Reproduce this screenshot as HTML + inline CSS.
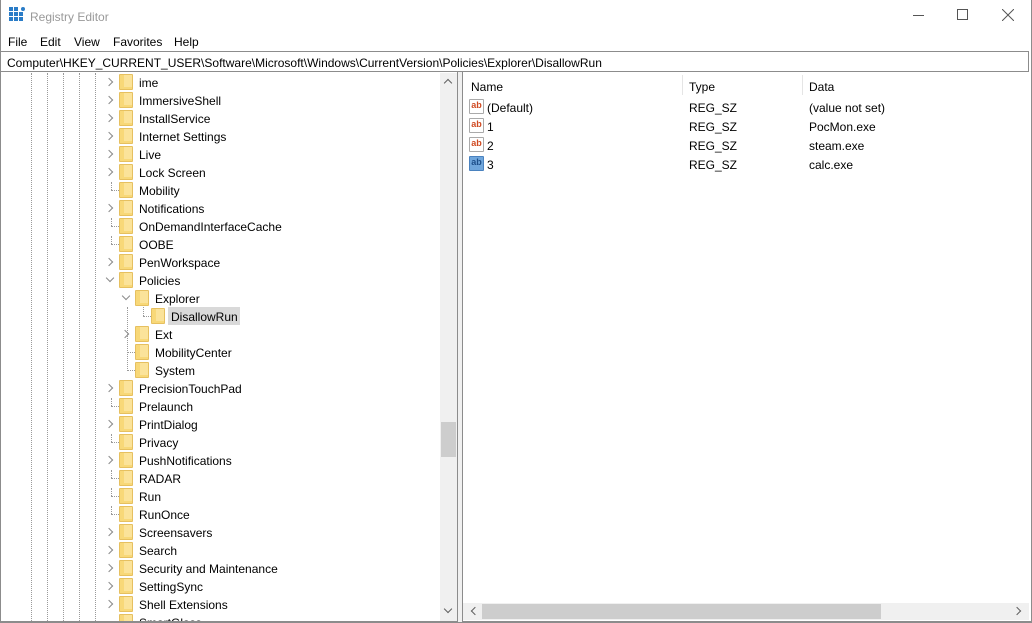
<!DOCTYPE html>
<html><head><meta charset="utf-8"><style>
*{margin:0;padding:0;box-sizing:border-box}
body{width:1032px;height:623px;overflow:hidden;background:#fff;font-family:"Liberation Sans",sans-serif;font-size:12px;color:#000;position:relative}
.a{position:absolute}
.t{position:absolute;white-space:nowrap;line-height:18px;padding-top:1px}
.f{position:absolute;width:14px;height:16px;background:#f8d878;border:1px solid #e6c060;border-radius:1px}
.f:after{content:"";position:absolute;left:4px;top:0;width:8px;height:12px;background:#fbe39a}
.ch{position:absolute;width:6px;height:6px;border-right:1px solid #8a8a8a;border-bottom:1px solid #8a8a8a}
.r{transform:rotate(-45deg)}
.d{transform:rotate(45deg)}
.vl{position:absolute;width:0;border-left:1px dotted #9a9a9a}
.hl{position:absolute;height:0;border-top:1px dotted #9a9a9a}
.ic{position:absolute;width:15px;height:15px;border:1px solid #aaa;background:#fff;font-size:9px;font-weight:bold;color:#d04a21;line-height:11px;text-align:center;border-radius:1px}
#tree{position:absolute;left:1px;top:72px;width:456px;height:549px;overflow:hidden}
#tree>div{margin-left:-1px;margin-top:-72px}
</style></head><body>
<div class="a" style="left:0;top:0;width:1032px;height:623px;border:1px solid #8c8c8c;border-top:none"></div>
<svg class="a" style="left:8px;top:7px" width="18" height="18"><rect x="1" y="5" width="4" height="4" fill="#2a7cc7"/><rect x="6" y="5" width="4" height="4" fill="#2a7cc7"/><rect x="1" y="10" width="4" height="4" fill="#2a7cc7"/><rect x="6" y="10" width="4" height="4" fill="#2a7cc7"/><rect x="11" y="10" width="4" height="4" fill="#2a7cc7"/><rect x="11" y="5" width="4" height="4" fill="#2a7cc7"/><rect x="1" y="0" width="4" height="4" fill="#2a7cc7"/><rect x="6" y="0" width="4" height="4" fill="#2a7cc7"/><circle cx="15" cy="2" r="2" fill="#2a7cc7"/></svg>
<div class="t" style="left:30px;top:7px;color:#999;font-size:12px">Registry Editor</div>
<div class="a" style="left:913px;top:15px;width:11px;height:1px;background:#555"></div>
<div class="a" style="left:957px;top:9px;width:11px;height:11px;border:1px solid #555"></div>
<svg class="a" style="left:1002px;top:9px" width="12" height="12"><path d="M0 0L12 12M12 0L0 12" stroke="#555" stroke-width="1"/></svg>
<div class="t" style="left:8px;top:32px">File</div>
<div class="t" style="left:40px;top:32px">Edit</div>
<div class="t" style="left:74px;top:32px">View</div>
<div class="t" style="left:113px;top:32px">Favorites</div>
<div class="t" style="left:174px;top:32px">Help</div>
<div class="a" style="left:0;top:51px;width:1029px;height:21px;border:1px solid #8c8c8c"></div>
<div class="t" style="left:7px;top:53px">Computer\HKEY_CURRENT_USER\Software\Microsoft\Windows\CurrentVersion\Policies\Explorer\DisallowRun</div>
<div id="tree"><div style="position:relative">
<div class="vl" style="left:31px;top:73px;height:548px"></div>
<div class="vl" style="left:47px;top:73px;height:548px"></div>
<div class="vl" style="left:63px;top:73px;height:548px"></div>
<div class="vl" style="left:79px;top:73px;height:548px"></div>
<div class="vl" style="left:95px;top:73px;height:548px"></div>
<div class="ch r" style="left:106px;top:79px"></div><div class="f" style="left:119px;top:74px"></div><div class="t" style="left:139px;top:73px">ime</div>
<div class="ch r" style="left:106px;top:97px"></div><div class="f" style="left:119px;top:92px"></div><div class="t" style="left:139px;top:91px">ImmersiveShell</div>
<div class="ch r" style="left:106px;top:115px"></div><div class="f" style="left:119px;top:110px"></div><div class="t" style="left:139px;top:109px">InstallService</div>
<div class="ch r" style="left:106px;top:133px"></div><div class="f" style="left:119px;top:128px"></div><div class="t" style="left:139px;top:127px">Internet Settings</div>
<div class="ch r" style="left:106px;top:151px"></div><div class="f" style="left:119px;top:146px"></div><div class="t" style="left:139px;top:145px">Live</div>
<div class="ch r" style="left:106px;top:169px"></div><div class="f" style="left:119px;top:164px"></div><div class="t" style="left:139px;top:163px">Lock Screen</div>
<div class="vl" style="left:111px;top:182px;height:8px"></div><div class="hl" style="left:111px;top:190px;width:8px"></div><div class="f" style="left:119px;top:182px"></div><div class="t" style="left:139px;top:181px">Mobility</div>
<div class="ch r" style="left:106px;top:205px"></div><div class="f" style="left:119px;top:200px"></div><div class="t" style="left:139px;top:199px">Notifications</div>
<div class="vl" style="left:111px;top:218px;height:8px"></div><div class="hl" style="left:111px;top:226px;width:8px"></div><div class="f" style="left:119px;top:218px"></div><div class="t" style="left:139px;top:217px">OnDemandInterfaceCache</div>
<div class="vl" style="left:111px;top:236px;height:8px"></div><div class="hl" style="left:111px;top:244px;width:8px"></div><div class="f" style="left:119px;top:236px"></div><div class="t" style="left:139px;top:235px">OOBE</div>
<div class="ch r" style="left:106px;top:259px"></div><div class="f" style="left:119px;top:254px"></div><div class="t" style="left:139px;top:253px">PenWorkspace</div>
<div class="ch d" style="left:107px;top:275px"></div><div class="f" style="left:119px;top:272px"></div><div class="t" style="left:139px;top:271px">Policies</div>
<div class="ch d" style="left:123px;top:293px"></div><div class="f" style="left:135px;top:290px"></div><div class="t" style="left:155px;top:289px">Explorer</div>
<div class="vl" style="left:127px;top:307px;height:64px"></div>
<div class="vl" style="left:143px;top:307px;height:9px"></div><div class="hl" style="left:143px;top:316px;width:8px"></div>
<div class="a" style="left:168px;top:307px;width:72px;height:18px;background:#d9d9d9"></div>
<div class="f" style="left:151px;top:308px"></div><div class="t" style="left:171px;top:307px">DisallowRun</div>
<div class="ch r" style="left:122px;top:331px"></div><div class="f" style="left:135px;top:326px"></div><div class="t" style="left:155px;top:325px">Ext</div>
<div class="hl" style="left:127px;top:352px;width:8px"></div><div class="f" style="left:135px;top:344px"></div><div class="t" style="left:155px;top:343px">MobilityCenter</div>
<div class="hl" style="left:127px;top:370px;width:8px"></div><div class="f" style="left:135px;top:362px"></div><div class="t" style="left:155px;top:361px">System</div>
<div class="ch r" style="left:106px;top:385px"></div><div class="f" style="left:119px;top:380px"></div><div class="t" style="left:139px;top:379px">PrecisionTouchPad</div>
<div class="vl" style="left:111px;top:398px;height:8px"></div><div class="hl" style="left:111px;top:406px;width:8px"></div><div class="f" style="left:119px;top:398px"></div><div class="t" style="left:139px;top:397px">Prelaunch</div>
<div class="ch r" style="left:106px;top:421px"></div><div class="f" style="left:119px;top:416px"></div><div class="t" style="left:139px;top:415px">PrintDialog</div>
<div class="vl" style="left:111px;top:434px;height:8px"></div><div class="hl" style="left:111px;top:442px;width:8px"></div><div class="f" style="left:119px;top:434px"></div><div class="t" style="left:139px;top:433px">Privacy</div>
<div class="ch r" style="left:106px;top:457px"></div><div class="f" style="left:119px;top:452px"></div><div class="t" style="left:139px;top:451px">PushNotifications</div>
<div class="vl" style="left:111px;top:470px;height:8px"></div><div class="hl" style="left:111px;top:478px;width:8px"></div><div class="f" style="left:119px;top:470px"></div><div class="t" style="left:139px;top:469px">RADAR</div>
<div class="vl" style="left:111px;top:488px;height:8px"></div><div class="hl" style="left:111px;top:496px;width:8px"></div><div class="f" style="left:119px;top:488px"></div><div class="t" style="left:139px;top:487px">Run</div>
<div class="vl" style="left:111px;top:506px;height:8px"></div><div class="hl" style="left:111px;top:514px;width:8px"></div><div class="f" style="left:119px;top:506px"></div><div class="t" style="left:139px;top:505px">RunOnce</div>
<div class="ch r" style="left:106px;top:529px"></div><div class="f" style="left:119px;top:524px"></div><div class="t" style="left:139px;top:523px">Screensavers</div>
<div class="ch r" style="left:106px;top:547px"></div><div class="f" style="left:119px;top:542px"></div><div class="t" style="left:139px;top:541px">Search</div>
<div class="ch r" style="left:106px;top:565px"></div><div class="f" style="left:119px;top:560px"></div><div class="t" style="left:139px;top:559px">Security and Maintenance</div>
<div class="ch r" style="left:106px;top:583px"></div><div class="f" style="left:119px;top:578px"></div><div class="t" style="left:139px;top:577px">SettingSync</div>
<div class="ch r" style="left:106px;top:601px"></div><div class="f" style="left:119px;top:596px"></div><div class="t" style="left:139px;top:595px">Shell Extensions</div>
<div class="f" style="left:119px;top:614px"></div><div class="t" style="left:139px;top:613px">SmartGlass</div>
</div></div>
<div class="a" style="left:0;top:621px;width:1032px;height:2px;background:#8c8c8c"></div>
<div class="a" style="left:440px;top:73px;width:17px;height:548px;background:#f0f0f0"></div>
<div class="a" style="left:441px;top:422px;width:15px;height:35px;background:#cdcdcd"></div>
<div class="ch" style="left:445px;top:80px;transform:rotate(225deg);border-color:#606060"></div>
<div class="ch d" style="left:445px;top:606px;border-color:#606060"></div>
<div class="a" style="left:457px;top:72px;width:6px;height:550px;background:#f0f0f0;border-left:1px solid #8c8c8c;border-right:1px solid #8c8c8c"></div>
<div class="t" style="left:471px;top:77px">Name</div>
<div class="a" style="left:682px;top:75px;width:1px;height:20px;background:#e5e5e5"></div>
<div class="t" style="left:689px;top:77px">Type</div>
<div class="a" style="left:802px;top:75px;width:1px;height:20px;background:#e5e5e5"></div>
<div class="t" style="left:809px;top:77px">Data</div>
<div class="ic" style="left:469px;top:99px">ab</div><div class="t" style="left:487px;top:98px">(Default)</div><div class="t" style="left:689px;top:98px">REG_SZ</div><div class="t" style="left:809px;top:98px">(value not set)</div>
<div class="ic" style="left:469px;top:118px">ab</div><div class="t" style="left:487px;top:117px">1</div><div class="t" style="left:689px;top:117px">REG_SZ</div><div class="t" style="left:809px;top:117px">PocMon.exe</div>
<div class="ic" style="left:469px;top:137px">ab</div><div class="t" style="left:487px;top:136px">2</div><div class="t" style="left:689px;top:136px">REG_SZ</div><div class="t" style="left:809px;top:136px">steam.exe</div>
<div class="ic" style="left:469px;top:156px;background:#6fa6dc;border-color:#4a82bf;color:#1d4f8a">ab</div><div class="t" style="left:487px;top:155px">3</div><div class="t" style="left:689px;top:155px">REG_SZ</div><div class="t" style="left:809px;top:155px">calc.exe</div>
<div class="a" style="left:463px;top:603px;width:566px;height:17px;background:#f0f0f0"></div>
<div class="a" style="left:482px;top:604px;width:399px;height:15px;background:#cdcdcd"></div>
<div class="ch" style="left:472px;top:608px;transform:rotate(135deg);border-color:#606060"></div>
<div class="ch r" style="left:1014px;top:608px;border-color:#606060"></div>
</body></html>
